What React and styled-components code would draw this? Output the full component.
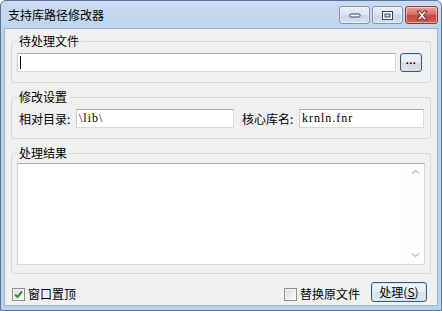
import React from "react";
import styled, { createGlobalStyle } from "styled-components";

const GlobalStyle = createGlobalStyle`
  html, body {
    margin: 0;
    padding: 0;
    background: #ffffff;
  }
  body {
    font-family: "Noto Sans CJK SC", "Liberation Sans", sans-serif;
    font-size: 12px;
    color: #000;
  }
  * {
    box-sizing: border-box;
  }
`;

const Window = styled.div`
  width: 442px;
  height: 311px;
  display: flex;
  flex-direction: column;
  background: linear-gradient(#c9dcf1, #bcd2ea 40px, #bcd2ea);
  border: 1px solid #5a7598;
  border-radius: 6px 6px 0 0;
  padding: 0 3px 4px;
`;

const TitleBar = styled.div`
  height: 27px;
  display: flex;
  align-items: flex-start;
  flex: none;
`;

const Title = styled.div`
  flex: 1;
  padding-left: 4px;
  line-height: 27px;
  font-size: 12px;
`;

const CaptionGroup = styled.div`
  display: flex;
  gap: 2px;
  margin-top: 5px;
`;

const CaptionButton = styled.div`
  width: ${(p) => p.$w}px;
  height: 18px;
  border: 1px solid ${(p) => (p.$close ? "#8f3a34" : "#7f95b2")};
  border-radius: 3px;
  background: ${(p) =>
    p.$close
      ? "linear-gradient(#e7a39a, #d0675c 50%, #c4463c 51%, #cf5e52)"
      : "linear-gradient(#e9f0f8, #d8e4f2 50%, #c6d7eb 51%, #d3e1f1)"};
  display: flex;
  align-items: center;
  justify-content: center;
  box-shadow: inset 0 0 0 1px rgba(255, 255, 255, 0.45);
`;

const Client = styled.div`
  flex: 1;
  background: #f0f0f0;
  border: 1px solid #9fb3cb;
  padding: 5px 6px 3px;
  display: flex;
  flex-direction: column;
`;

const Group = styled.fieldset`
  margin: 0 0 ${(p) => p.$mb}px;
  min-inline-size: 0;
  border: 1px solid #d3d9df;
  border-radius: 3px;
  padding: ${(p) => p.$pt}px ${(p) => p.$pr}px ${(p) => p.$pb}px 5px;
`;

const Legend = styled.legend`
  padding: 0 2px;
  line-height: 14px;
  font-size: 12px;
`;

const Row = styled.div`
  display: flex;
  align-items: center;
`;

const Field = styled.div`
  height: 19px;
  width: ${(p) => (p.$w ? `${p.$w}px` : "auto")};
  flex: ${(p) => (p.$w ? "none" : "1")};
  background: #fff;
  border: 1px solid #d5d9e0;
  border-top-color: #abadb3;
  border-left-color: #c9cdd4;
  display: flex;
  align-items: center;
  padding-left: 2px;
  font-family: "Liberation Serif", "DejaVu Serif", serif;
  font-size: 12px;
  letter-spacing: 1px;
`;

const Caret = styled.span`
  width: 1px;
  height: 13px;
  background: #000;
`;

const FieldLabel = styled.span`
  width: 57px;
  flex: none;
  margin-left: ${(p) => p.$ml}px;
  white-space: nowrap;
  line-height: 14px;
`;

const BrowseButton = styled.div`
  width: 22px;
  height: 19px;
  margin-left: 4px;
  border: 1px solid #3a5a7c;
  border-radius: 3px;
  background: linear-gradient(#f4f4f6, #ebe8ee 50%, #ddd6df 51%, #e6dfe8);
  box-shadow: inset 0 0 0 1px #c9e4f6;
  display: flex;
  align-items: center;
  justify-content: center;
  font-family: "Liberation Sans", sans-serif;
  font-weight: bold;
  font-size: 11px;
  letter-spacing: 0.5px;
  line-height: 1;
  padding-bottom: 5px;
`;

const TextArea = styled.div`
  height: 102px;
  background: #fff;
  border: 1px solid #d5d9e0;
  border-top-color: #abadb3;
  border-left-color: #c9cdd4;
  display: flex;
  justify-content: flex-end;
`;

const ScrollBar = styled.div`
  width: 17px;
  display: flex;
  flex-direction: column;
  justify-content: space-between;
  align-items: center;
  padding: 5px 0 6px;
  background: #fdfdfd;
`;

const BottomBar = styled.div`
  display: flex;
  align-items: center;
  height: 20px;
  padding: 0 4px 0 1px;
`;

const CheckItem = styled.label`
  display: flex;
  align-items: center;
  gap: 3px;
  margin-top: 4px;
  line-height: 14px;
  margin-left: ${(p) => (p.$push ? "auto" : "0")};
`;

const CheckBox = styled.span`
  width: 13px;
  height: 13px;
  border: 1px solid #8e8f8f;
  background: linear-gradient(135deg, #dcdcdc, #fbfbfb);
  box-shadow: inset 0 0 0 1px #f4f4f4;
  display: flex;
  align-items: center;
  justify-content: center;
`;

const ActionButton = styled.div`
  width: 56px;
  height: 20px;
  margin-left: 11px;
  border: 1px solid #3c5a78;
  border-radius: 3px;
  background: linear-gradient(#f2f4f8, #e8edf3 50%, #d7e0ea 51%, #e0e7ef);
  box-shadow: inset 0 0 0 1px #cde8f8;
  display: flex;
  align-items: center;
  justify-content: center;
  line-height: 14px;

  u {
    text-decoration: underline;
  }
`;

function MinIcon() {
  return (
    <svg width="12" height="6" viewBox="0 0 12 6">
      <rect x="1" y="2" width="10" height="3" rx="1" fill="#fff" stroke="#33455e" strokeWidth="1" />
    </svg>
  );
}

function MaxIcon() {
  return (
    <svg width="11" height="9" viewBox="0 0 11 9">
      <rect x="0.5" y="0.5" width="10" height="8" fill="#fff" stroke="#33455e" />
      <rect x="3" y="3" width="5" height="3" fill="#c9d7ea" stroke="#33455e" strokeWidth="1" />
    </svg>
  );
}

function CloseIcon() {
  return (
    <svg width="14" height="11" viewBox="0 0 14 11">
      <path
        d="M2 1 L5 1 L7 3.5 L9 1 L12 1 L8.5 5.5 L12 10 L9 10 L7 7.5 L5 10 L2 10 L5.5 5.5 Z"
        fill="#fff"
        stroke="#5c2320"
        strokeWidth="1"
        strokeLinejoin="round"
      />
    </svg>
  );
}

function Chevron({ down }) {
  return (
    <svg width="9" height="6" viewBox="0 0 9 6">
      <path
        d={down ? "M1 1.5 L4.5 4.5 L8 1.5" : "M1 4.5 L4.5 1.5 L8 4.5"}
        fill="none"
        stroke="#c3c7cc"
        strokeWidth="1.6"
      />
    </svg>
  );
}

function Check() {
  return (
    <svg width="9" height="9" viewBox="0 0 9 9">
      <path d="M1 4.5 L3.5 7 L8 1.5" fill="none" stroke="#3f8a3a" strokeWidth="2" />
    </svg>
  );
}

export default function App() {
  return (
    <>
      <GlobalStyle />
      <Window>
        <TitleBar>
          <Title>支持库路径修改器</Title>
          <CaptionGroup>
            <CaptionButton $w={31}>
              <MinIcon />
            </CaptionButton>
            <CaptionButton $w={31}>
              <MaxIcon />
            </CaptionButton>
            <CaptionButton $w={33} $close>
              <CloseIcon />
            </CaptionButton>
          </CaptionGroup>
        </TitleBar>
        <Client>
          <Group $pt={5} $pr={8} $pb={10} $mb={7}>
            <Legend>待处理文件</Legend>
            <Row>
              <Field>
                <Caret />
              </Field>
              <BrowseButton>...</BrowseButton>
            </Row>
          </Group>
          <Group $pt={5} $pr={6} $pb={10} $mb={7}>
            <Legend>修改设置</Legend>
            <Row>
              <FieldLabel $ml={2}>相对目录:</FieldLabel>
              <Field $w={158}>\lib\</Field>
              <FieldLabel $ml={8}>核心库名:</FieldLabel>
              <Field>krnln.fnr</Field>
            </Row>
          </Group>
          <Group $pt={3} $pr={5} $pb={8} $mb={8}>
            <Legend>处理结果</Legend>
            <TextArea>
              <ScrollBar>
                <Chevron />
                <Chevron down />
              </ScrollBar>
            </TextArea>
          </Group>
          <BottomBar>
            <CheckItem>
              <CheckBox>
                <Check />
              </CheckBox>
              窗口置顶
            </CheckItem>
            <CheckItem $push>
              <CheckBox />
              替换原文件
            </CheckItem>
            <ActionButton>
              处理(<u>S</u>)
            </ActionButton>
          </BottomBar>
        </Client>
      </Window>
    </>
  );
}
